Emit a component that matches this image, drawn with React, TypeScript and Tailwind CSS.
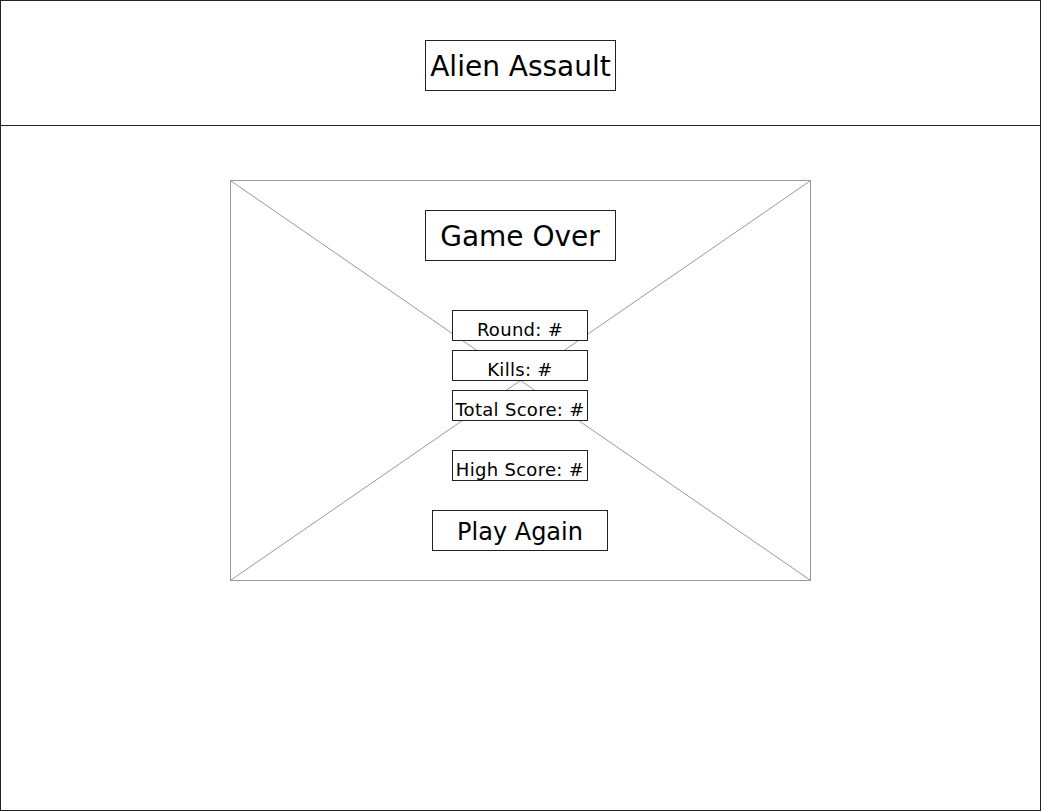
import React from "react";

const font = { fontFamily: '"DejaVu Sans", "Liberation Sans", sans-serif' };

function Box({ className, children }: { className: string; children: React.ReactNode }) {
  return (
    <div className={`flex items-center justify-center border border-[#222] bg-white text-black ${className}`}>
      {children}
    </div>
  );
}

export default function App() {
  return (
    <div className="w-[1041px] h-[811px] bg-white border border-[#222] flex flex-col" style={font}>
      <header className="h-[125px] shrink-0 border-b border-[#222] flex justify-center pt-[39px]">
        <Box className="w-[191px] h-[51px] text-[28px] pt-[2px]">Alien Assault</Box>
      </header>
      <main className="flex-1 flex justify-center pt-[54px]">
        <div className="relative w-[581px] h-[401px] border border-[#999]">
          <svg className="absolute inset-0 w-full h-full" viewBox="0 0 579 399" preserveAspectRatio="none">
            <line x1="0" y1="0" x2="579" y2="399" stroke="#999" strokeWidth="1" />
            <line x1="579" y1="0" x2="0" y2="399" stroke="#999" strokeWidth="1" />
          </svg>
          <div className="relative flex flex-col items-center pt-[29px] pr-[1px]">
            <Box className="w-[191px] h-[51px] text-[28px] pt-[2px]">Game Over</Box>
            <Box className="w-[136px] h-[31px] text-[18px] tracking-[0.3px] mt-[49px] pt-[7px]">Round: #</Box>
            <Box className="w-[136px] h-[31px] text-[18px] tracking-[0.3px] mt-[9px] pt-[7px]">Kills: #</Box>
            <Box className="w-[136px] h-[31px] text-[18px] tracking-[0.3px] mt-[9px] pt-[7px]">Total Score: #</Box>
            <Box className="w-[136px] h-[31px] text-[18px] tracking-[0.3px] mt-[29px] pt-[7px]">High Score: #</Box>
            <Box className="w-[176px] h-[41px] text-[24px] mt-[29px] pt-[3px]">Play Again</Box>
          </div>
        </div>
      </main>
    </div>
  );
}
